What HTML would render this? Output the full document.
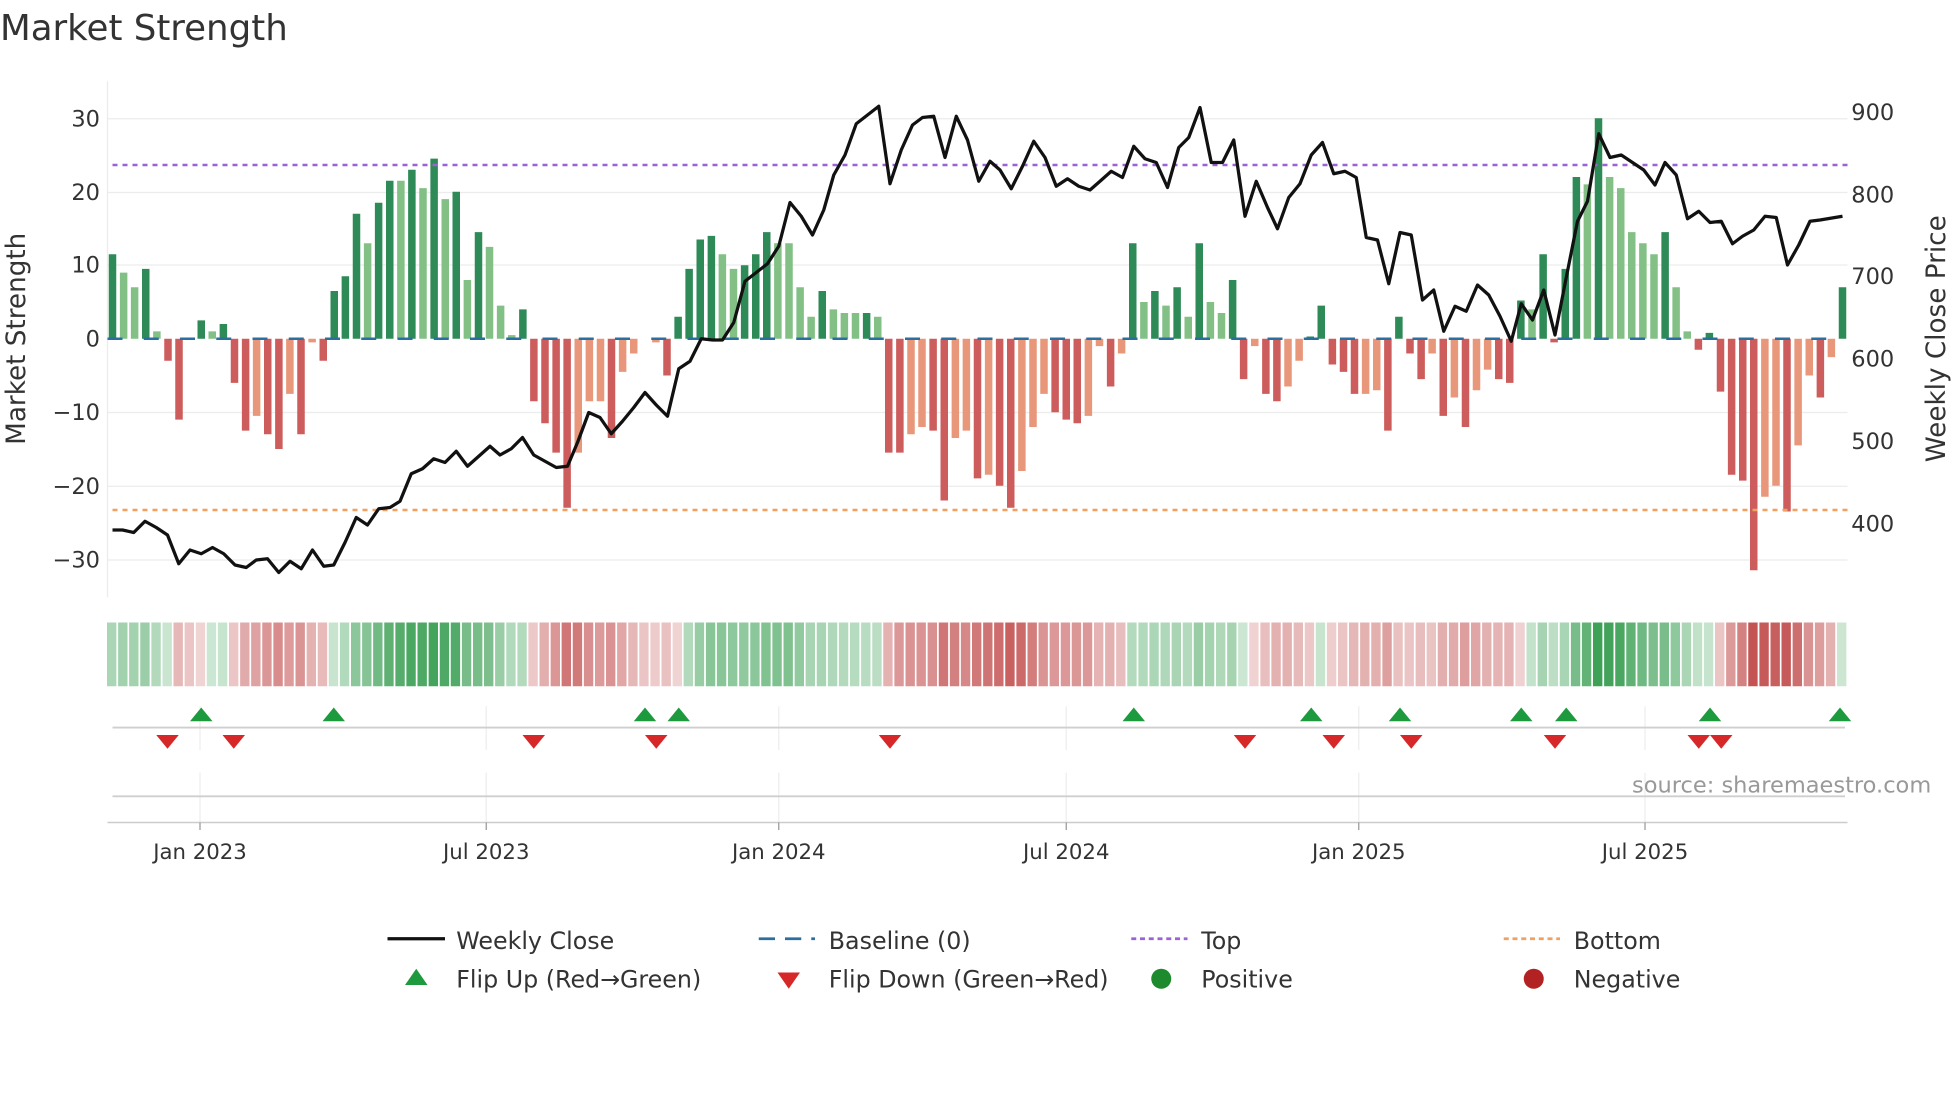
<!DOCTYPE html>
<html><head><meta charset="utf-8"><style>
html,body{margin:0;padding:0;background:#fff;}
svg{display:block;font-family:"DejaVu Sans","Liberation Sans",sans-serif;}
</style></head><body>
<svg id="s" width="1960" height="1102" viewBox="0 0 1568 881.6" xmlns="http://www.w3.org/2000/svg">
<rect width="1568" height="882" fill="#fff"/>
<text x="0" y="32" font-size="28.5" fill="#333">Market Strength</text>
<g stroke="#ececec" stroke-width="1">
<line x1="86" y1="95" x2="1478" y2="95"/><line x1="86" y1="154" x2="1478" y2="154"/><line x1="86" y1="212" x2="1478" y2="212"/>
<line x1="86" y1="330" x2="1478" y2="330"/><line x1="86" y1="389" x2="1478" y2="389"/><line x1="86" y1="448" x2="1478" y2="448"/>
<line x1="86" y1="65" x2="86" y2="478"/>
</g>
<g font-size="18" fill="#333" text-anchor="end">
<text x="80" y="101">30</text><text x="80" y="160">20</text><text x="80" y="218">10</text><text x="80" y="277">0</text>
<text x="80" y="336">−10</text><text x="80" y="395">−20</text><text x="80" y="454">−30</text>
</g>
<g font-size="18" fill="#333">
<text x="1481" y="96">900</text><text x="1481" y="162">800</text><text x="1481" y="227">700</text><text x="1481" y="293">600</text>
<text x="1481" y="359">500</text><text x="1481" y="425">400</text>
</g>
<text transform="translate(20,271) rotate(-90)" font-size="21" fill="#333" text-anchor="middle">Market Strength</text>
<text transform="translate(1556,271) rotate(-90)" font-size="21" fill="#333" text-anchor="middle">Weekly Close Price</text>
<g id="bars"></g>
<line x1="86" y1="271" x2="1478" y2="271" stroke="#2a6fa0" stroke-width="2" stroke-dasharray="12 17"/>
<line x1="90" y1="132" x2="1478" y2="132" stroke="#9b62d8" stroke-width="2" stroke-dasharray="4 4"/>
<line x1="90" y1="408" x2="1478" y2="408" stroke="#f0a060" stroke-width="2" stroke-dasharray="4 4"/>
<polyline id="price" fill="none" stroke="#111" stroke-width="2.6" stroke-linejoin="round" points="90,424 98,424 107,426 116,417 125,422 134,428 143,451 152,440 161,443 170,438 179,443 188,452 197,454 205,448 214,447 223,458 232,449 241,455 250,440 259,453 267,452 276,434 285,414 294,420 303,407 312,406 320,401 329,379 338,375 347,367 356,370 365,361 374,373 383,365 392,357 400,364 409,359 418,350 427,364 436,369 445,374 454,373 462,354 471,330 480,334 489,347 498,337 507,326 516,314 525,324 534,333 543,295 552,289 561,271 570,272 578,272 587,258 596,225 605,218 614,211 623,197 632,162 641,173 650,188 659,168 667,140 676,124 685,99 694,92 703,85 712,147 721,120 730,100 738,94 747,93 756,126 765,93 774,112 783,145 792,129 800,136 809,151 818,133 827,113 836,126 845,149 854,143 863,149 872,152 880,145 889,137 898,142 907,117 916,127 925,130 934,150 943,118 951,110 960,86 969,130 978,130 987,112 996,173 1005,145 1014,166 1022,183 1031,158 1040,147 1049,124 1058,114 1067,139 1076,137 1085,142 1093,190 1102,192 1111,227 1120,186 1129,188 1138,240 1147,232 1155,265 1164,245 1173,249 1182,228 1191,236 1200,253 1209,273 1217,243 1226,256 1235,232 1244,268 1253,222 1262,177 1270,161 1279,107 1288,126 1297,124 1306,130 1315,136 1324,148 1332,130 1341,140 1350,175 1359,169 1368,178 1377,177 1386,195 1394,189 1403,184 1412,173 1421,174 1430,212 1439,196 1448,177 1456,176 1474,173"/>
<g id="strip"></g>
<g stroke="#eeeeee" stroke-width="1">
<line x1="160" y1="565" x2="160" y2="600"/><line x1="389" y1="565" x2="389" y2="600"/><line x1="623" y1="565" x2="623" y2="600"/><line x1="853" y1="565" x2="853" y2="600"/><line x1="1087" y1="565" x2="1087" y2="600"/><line x1="1316" y1="565" x2="1316" y2="600"/>
<line x1="160" y1="618" x2="160" y2="658"/><line x1="389" y1="618" x2="389" y2="658"/><line x1="623" y1="618" x2="623" y2="658"/><line x1="853" y1="618" x2="853" y2="658"/><line x1="1087" y1="618" x2="1087" y2="658"/><line x1="1316" y1="618" x2="1316" y2="658"/>
</g>
<line x1="90" y1="582" x2="1476" y2="582" stroke="#cfcfcf" stroke-width="1.5"/>
<line x1="90" y1="637" x2="1476" y2="637" stroke="#cfcfcf" stroke-width="1.5"/>
<g id="marks"></g>
<line x1="86" y1="658" x2="1478" y2="658" stroke="#cccccc" stroke-width="1.2"/>
<g stroke="#999" stroke-width="1">
<line x1="160" y1="658" x2="160" y2="664"/><line x1="389" y1="658" x2="389" y2="664"/><line x1="623" y1="658" x2="623" y2="664"/><line x1="853" y1="658" x2="853" y2="664"/><line x1="1087" y1="658" x2="1087" y2="664"/><line x1="1316" y1="658" x2="1316" y2="664"/>
</g>
<g font-size="17" fill="#333" text-anchor="middle">
<text x="160" y="687">Jan 2023</text><text x="389" y="687">Jul 2023</text><text x="623" y="687">Jan 2024</text>
<text x="853" y="687">Jul 2024</text><text x="1087" y="687">Jan 2025</text><text x="1316" y="687">Jul 2025</text>
</g>
<text x="1545" y="634" font-size="18" fill="#999" text-anchor="end">source: sharemaestro.com</text>
<g font-size="19" fill="#333">
<line x1="310" y1="751" x2="356" y2="751" stroke="#111" stroke-width="2.6"/>
<text x="365" y="759">Weekly Close</text>
<line x1="607" y1="751" x2="652" y2="751" stroke="#2a6fa0" stroke-width="2.2" stroke-dasharray="13 8"/>
<text x="663" y="759">Baseline (0)</text>
<line x1="905" y1="751" x2="950" y2="751" stroke="#9b62d8" stroke-width="2.2" stroke-dasharray="4 3"/>
<text x="961" y="759">Top</text>
<line x1="1203" y1="751" x2="1248" y2="751" stroke="#f0a060" stroke-width="2.2" stroke-dasharray="4 3"/>
<text x="1259" y="759">Bottom</text>
<polygon points="324,788 342,788 333,775" fill="#1e9a3e"/>
<text x="365" y="790">Flip Up (Red→Green)</text>
<polygon points="622,778 640,778 631,791" fill="#d62828"/>
<text x="663" y="790">Flip Down (Green→Red)</text>
<circle cx="929" cy="783" r="8" fill="#1e8a2e"/>
<text x="961" y="790">Positive</text>
<circle cx="1227" cy="783" r="8" fill="#b22222"/>
<text x="1259" y="790">Negative</text>
</g>
</svg>
<script>
var raw="11.5D 9L 7L 9.5D 1L -3D -11D 0D 2.5D 1L 2D -6D -12.5D -10.5L -13D -15D -7.5L -13D -0.5L -3D 6.5D 8.5D 17D 13L 18.5D 21.5D 21.5L 23D 20.5L 24.5D 19L 20D 8L 14.5D 12.5L 4.5L 0.5L 4D -8.5D -11.5D -15.5D -23D -15.5L -8.5L -8.5L -13.5D -4.5L -2L 0D -0.5L -5D 3D 9.5D 13.5D 14D 11.5L 9.5L 10D 11.5D 14.5D 13L 13L 7L 3L 6.5D 4L 3.5L 3.5L 3.5D 3L -15.5D -15.5D -13L -12L -12.5D -22D -13.5L -12.5L -19D -18.5L -20D -23D -18L -12L -7.5L -10D -11D -11.5D -10.5L -1L -6.5D -2L 13D 5L 6.5D 4.5L 7D 3L 13D 5L 3.5L 8D -5.5D -1L -7.5D -8.5D -6.5L -3L 0.3D 4.5D -3.5D -4.5D -7.5D -7.5L -7L -12.5D 3D -2D -5.5D -2L -10.5D -8L -12D -7L -4.2L -5.5D -6D 5.2D 4L 11.5D -0.5D 9.5D 22D 21L 30D 22L 20.5L 14.5L 13L 11.5L 14.5D 7L 1L -1.5D 0.8D -7.2D -18.5D -19.3D -31.5D -21.5L -20L -23.5D -14.5L -5L -8D -2.5L 7D".split(" ");
var NS="http://www.w3.org/2000/svg";
var bars=document.getElementById("bars"),strip=document.getElementById("strip"),marks=document.getElementById("marks");
var n=raw.length,step=1384/(n-1);
function el(p,t,a){var e=document.createElementNS(NS,t);for(var k in a)e.setAttribute(k,a[k]);p.appendChild(e);return e;}
function mix(c,t){var r=Math.round(255+(c[0]-255)*t),g=Math.round(255+(c[1]-255)*t),b=Math.round(255+(c[2]-255)*t);return "rgb("+r+","+g+","+b+")";}
var sm=0;
for(var i=0;i<n;i++){
 var s=raw[i],d=s.slice(-1),v=parseFloat(s);
 var x=90+i*step;
 var y0=271,y1=271-5.88*v;
 var col=v>=0?(d=="D"?"#2e8a57":"#82c085"):(d=="D"?"#cd5c5c":"#e8977a");
 if(Math.abs(v)>0.05) el(bars,"rect",{x:(x-3).toFixed(1),y:Math.min(y0,y1).toFixed(1),width:6,height:Math.abs(y1-y0).toFixed(1),fill:col});
 sm=sm*0.5+v*0.5;
 var t=Math.min(1,0.25+Math.abs(sm)/32);
 var c=sm>=0?mix([60,160,85],t):mix([195,80,80],t);
 el(strip,"rect",{x:(x-4.4).toFixed(1),y:498,width:(step-1.4).toFixed(1),height:51,fill:c});
}
[161,267,516,543,907,1049,1120,1217,1253,1368,1472].forEach(function(x){el(marks,"polygon",{points:(x-9)+",577 "+(x+9)+",577 "+x+",566",fill:"#1e9a3e"});});
[134,187,427,525,712,996,1067,1129,1244,1359,1377].forEach(function(x){el(marks,"polygon",{points:(x-9)+",588 "+(x+9)+",588 "+x+",599",fill:"#d62828"});});
</script>
</body></html>
